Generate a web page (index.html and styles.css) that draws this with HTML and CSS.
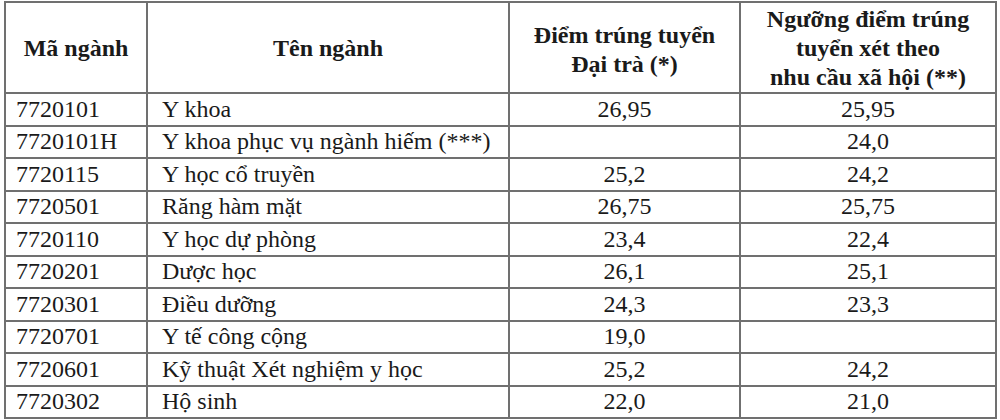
FILE: index.html
```html
<!DOCTYPE html>
<html lang="vi">
<head>
<meta charset="utf-8">
<title>Điểm trúng tuyển</title>
<link rel="stylesheet" href="styles.css">
</head>
<body>
<table class="scores">
  <colgroup>
    <col class="c-code">
    <col class="c-name">
    <col class="c-main">
    <col class="c-social">
  </colgroup>
  <thead>
    <tr class="head">
      <th>Mã ngành</th>
      <th>Tên ngành</th>
      <th class="h2">Điểm trúng tuyển<br>Đại trà (*)</th>
      <th class="h3">Ngưỡng điểm trúng<br>tuyển xét theo<br>nhu cầu xã hội (**)</th>
    </tr>
  </thead>
  <tbody>
    <tr><td class="code">7720101</td><td class="name">Y khoa</td><td class="num">26,95</td><td class="num">25,95</td></tr>
    <tr><td class="code">7720101H</td><td class="name">Y khoa phục vụ ngành hiếm (***)</td><td class="num"></td><td class="num">24,0</td></tr>
    <tr><td class="code">7720115</td><td class="name">Y học cổ truyền</td><td class="num">25,2</td><td class="num">24,2</td></tr>
    <tr><td class="code">7720501</td><td class="name">Răng hàm mặt</td><td class="num">26,75</td><td class="num">25,75</td></tr>
    <tr><td class="code">7720110</td><td class="name">Y học dự phòng</td><td class="num">23,4</td><td class="num">22,4</td></tr>
    <tr><td class="code">7720201</td><td class="name">Dược học</td><td class="num">26,1</td><td class="num">25,1</td></tr>
    <tr><td class="code">7720301</td><td class="name">Điều dưỡng</td><td class="num">24,3</td><td class="num">23,3</td></tr>
    <tr><td class="code">7720701</td><td class="name">Y tế công cộng</td><td class="num">19,0</td><td class="num"></td></tr>
    <tr><td class="code">7720601</td><td class="name">Kỹ thuật Xét nghiệm y học</td><td class="num">25,2</td><td class="num">24,2</td></tr>
    <tr><td class="code">7720302</td><td class="name">Hộ sinh</td><td class="num">22,0</td><td class="num">21,0</td></tr>
  </tbody>
</table>
</body>
</html>
```

FILE: styles.css
```css
html, body {
  margin: 0;
  padding: 0;
  background: #ffffff;
}

body {
  padding: 1px 0 0 4px;
  font-family: "Liberation Serif", "Times New Roman", serif;
  color: #1a1a1a;
}

.scores {
  border-collapse: collapse;
  table-layout: fixed;
  width: 991px;
  font-size: 24px;
}

.c-code { width: 142px; }
.c-name { width: 362px; }
.c-main { width: 231px; }
.c-social { width: 256px; }

.scores th,
.scores td {
  border: 2px solid #707070;
  padding: 0;
  vertical-align: middle;
}

.head {
  height: 90px;
}

.head th {
  font-weight: bold;
  line-height: 29px;
  text-align: center;
  padding-top: 2px;
}

.head .h2 {
  padding-top: 4px;
}

.scores tbody tr {
  height: 32.5px;
}

.code {
  padding-left: 10px !important;
  text-align: left;
}

.name {
  padding-left: 14px !important;
  text-align: left;
}

.num {
  text-align: center;
}
```
